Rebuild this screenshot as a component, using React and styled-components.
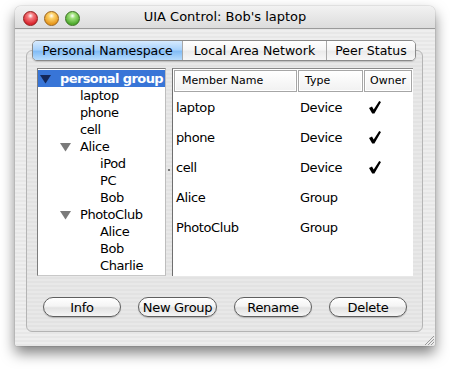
import styled, { createGlobalStyle } from "styled-components";

const GlobalStyle = createGlobalStyle`
    html, body {
        margin: 0;
        padding: 0;
        background: #ffffff;
    }
    body {
        width: 450px;
        height: 369px;
        overflow: hidden;
        font-family: "DejaVu Sans", "Liberation Sans", sans-serif;
        color: #000;
    }
`;

const pinstripe = `repeating-linear-gradient(to bottom, #eeeeee 0px, #eeeeee 2px, #e7e7e7 2px, #e7e7e7 4px)`;

const StyledStage = styled.div`
    padding: 6px 0 0 15px;
`;

const StyledWindow = styled.div`
    width: 420px;
    height: 340px;
    display: flex;
    flex-direction: column;
    border-radius: 6px 6px 2px 2px;
    background: ${pinstripe};
    box-shadow: 0 7px 14px rgba(0, 0, 0, 0.5), 0 0 1px rgba(0, 0, 0, 0.6);
    overflow: hidden;
    position: relative;
`;

const StyledTitleBar = styled.div`
    height: 22px;
    flex-shrink: 0;
    display: flex;
    align-items: center;
    padding-left: 8px;
    background: linear-gradient(to bottom, #f2f2f2, #dcdcdc);
    border-bottom: 1px solid #9a9a9a;
    position: relative;
`;

const StyledLights = styled.div`
    display: flex;
    gap: 6px;
    margin-top: 3px;
`;

const StyledLight = styled.span`
    width: 13px;
    height: 13px;
    border-radius: 50%;
    border: 1px solid ${props => props.edge};
    background: radial-gradient(circle at 50% 30%, #ffffff 0%, ${props => props.hi} 25%, ${props => props.base} 75%, ${props => props.hi} 100%);
`;

const StyledTitle = styled.div`
    position: absolute;
    left: 0;
    right: 0;
    top: 0;
    line-height: 22px;
    text-align: center;
    font-size: 13px;
    pointer-events: none;
`;

const StyledContent = styled.div`
    flex: 1;
    display: flex;
    flex-direction: column;
    padding: 11px 12px 14px 11px;
`;

const StyledTabStrip = styled.div`
    display: flex;
    margin-left: 6px;
    position: relative;
    z-index: 1;
    align-self: flex-start;
    border: 1px solid #8a8a8a;
    border-radius: 5px;
    overflow: hidden;
    box-shadow: 0 1px 1px rgba(0, 0, 0, 0.15);
`;

const StyledTab = styled.div`
    width: ${props => props.width}px;
    height: 19px;
    line-height: 19px;
    font-size: 12.5px;
    text-align: center;
    border-left: ${props => props.first ? "none" : "1px solid #a8a8a8"};
    background: ${props => props.active
        ? "linear-gradient(to bottom, #d6eafe 0%, #a9d2fb 45%, #83bdf6 55%, #b7dcfd 100%)"
        : "linear-gradient(to bottom, #ffffff 0%, #f6f6f6 45%, #ebebeb 55%, #f7f7f7 100%)"};
`;

const StyledGroup = styled.div`
    flex: 1;
    margin-top: -11px;
    border: 1px solid #b4b4b4;
    border-radius: 6px;
    background: repeating-linear-gradient(to bottom, #e8e8e8 0px, #e8e8e8 2px, #e2e2e2 2px, #e2e2e2 4px);
    display: flex;
    flex-direction: column;
    padding: 17px 9px 14px 10px;
`;

const StyledPanes = styled.div`
    display: flex;
    height: 208px;
`;

const StyledTree = styled.div`
    width: 127px;
    background: #fff;
    border: 1px solid;
    border-color: #7d7d7d #bdbdbd #c8c8c8 #7d7d7d;
    padding-top: 1px;
`;

const StyledSplitter = styled.div`
    width: 6px;
    display: flex;
    align-items: center;
    justify-content: center;
    padding-bottom: 4px;
`;

const StyledGrip = styled.span`
    width: 2px;
    height: 2px;
    border-radius: 1px;
    background: #555;
`;

const StyledTreeRow = styled.div`
    height: 17px;
    display: flex;
    align-items: center;
    padding-left: ${props => props.level * 20 + 2}px;
    font-size: 13px;
    letter-spacing: ${props => props.selected ? "-0.6px" : "-0.4px"};
    font-weight: ${props => props.selected ? "bold" : "normal"};
    color: ${props => props.selected ? "#ffffff" : "#000000"};
    background: ${props => props.selected ? "#3875d7" : "transparent"};
    white-space: nowrap;
    overflow: hidden;
`;

const StyledDisclosure = styled.span`
    width: 20px;
    flex-shrink: 0;
    display: flex;
    align-items: center;
`;

const StyledTable = styled.div`
    flex: 1;
    background: #fff;
    border-left: 1px solid #6f6f6f;
    border-top: 1px solid #8a8a8a;
    display: flex;
    flex-direction: column;
    padding: 1px 0 0 1px;
`;

const StyledTableHeader = styled.div`
    display: flex;
    height: 22px;
`;

const StyledHeaderCell = styled.div`
    width: ${props => props.width}px;
    box-sizing: border-box;
    margin-right: 1px;
    border: 1px solid #a6a6a6;
    box-shadow: inset 0 0 0 1px #ffffff;
    background: linear-gradient(to bottom, #ffffff, #f1f1f1);
    font-size: 11px;
    line-height: 20px;
    padding-left: ${props => props.pad}px;
`;

const StyledTableRow = styled.div`
    display: flex;
    height: 30px;
    align-items: center;
    font-size: 13px;
    letter-spacing: -0.4px;
`;

const StyledCell = styled.div`
    width: ${props => props.width}px;
    padding-left: ${props => props.pad}px;
    box-sizing: border-box;
    display: flex;
    align-items: center;
`;

const StyledButtons = styled.div`
    display: flex;
    gap: 17px;
    margin-top: 21px;
    padding-left: 6px;
`;

const StyledButton = styled.button`
    width: ${props => props.width}px;
    height: 20px;
    padding: 0;
    border: 1px solid #5f5f5f;
    border-radius: 10px;
    background: linear-gradient(to bottom, #ffffff 0%, #f4f4f4 45%, #e2e2e2 55%, #f5f5f5 100%);
    box-shadow: 0 1px 1px rgba(0, 0, 0, 0.2);
    font-family: inherit;
    font-size: 13px;
    letter-spacing: -0.3px;
    color: #000;
`;

const StyledResize = styled.svg`
    position: absolute;
    right: 1px;
    bottom: 1px;
`;

const tree = [
    { label: "personal group", level: 0, open: true, selected: true },
    { label: "laptop", level: 1 },
    { label: "phone", level: 1 },
    { label: "cell", level: 1 },
    { label: "Alice", level: 1, open: true },
    { label: "iPod", level: 2 },
    { label: "PC", level: 2 },
    { label: "Bob", level: 2 },
    { label: "PhotoClub", level: 1, open: true },
    { label: "Alice", level: 2 },
    { label: "Bob", level: 2 },
    { label: "Charlie", level: 2 },
];

const members = [
    { name: "laptop", type: "Device", owner: true },
    { name: "phone", type: "Device", owner: true },
    { name: "cell", type: "Device", owner: true },
    { name: "Alice", type: "Group" },
    { name: "PhotoClub", type: "Group" },
];

function Triangle({ color }) {
    return (
        <svg width="11" height="10" viewBox="0 0 11 10">
            <polygon points="0,1 11,1 5.5,9.5" fill={color} />
        </svg>
    );
}

function Check() {
    return (
        <svg width="12" height="13" viewBox="0 0 12 13">
            <polygon points="0,7 3,5.4 4.7,8.4 10.2,0 12,1.1 5.4,12.6 3.2,12.6" fill="#000" />
        </svg>
    );
}

export default function App() {
    return (
        <StyledStage>
            <GlobalStyle />
            <StyledWindow>
                <StyledTitleBar>
                    <StyledLights>
                        <StyledLight base="#d8212a" hi="#f47a7e" edge="#8e1b1b" />
                        <StyledLight base="#e6951a" hi="#fcd26a" edge="#99621a" />
                        <StyledLight base="#4aa72a" hi="#9fe07a" edge="#3a7020" />
                    </StyledLights>
                    <StyledTitle>UIA Control: Bob's laptop</StyledTitle>
                </StyledTitleBar>
                <StyledContent>
                    <StyledTabStrip>
                        <StyledTab first active width={149}>Personal Namespace</StyledTab>
                        <StyledTab width={143}>Local Area Network</StyledTab>
                        <StyledTab width={88}>Peer Status</StyledTab>
                    </StyledTabStrip>
                    <StyledGroup>
                        <StyledPanes>
                            <StyledTree>
                                {tree.map((item, i) => (
                                    <StyledTreeRow key={i} level={item.level} selected={item.selected}>
                                        <StyledDisclosure>
                                            {item.open && <Triangle color={item.selected ? "#14285a" : "#7a7a7a"} />}
                                        </StyledDisclosure>
                                        {item.label}
                                    </StyledTreeRow>
                                ))}
                            </StyledTree>
                            <StyledSplitter>
                                <StyledGrip />
                            </StyledSplitter>
                            <StyledTable>
                                <StyledTableHeader>
                                    <StyledHeaderCell width={123} pad={7}>Member Name</StyledHeaderCell>
                                    <StyledHeaderCell width={65} pad={6}>Type</StyledHeaderCell>
                                    <StyledHeaderCell width={48} pad={5}>Owner</StyledHeaderCell>
                                </StyledTableHeader>
                                {members.map(m => (
                                    <StyledTableRow key={m.name}>
                                        <StyledCell width={124} pad={2}>{m.name}</StyledCell>
                                        <StyledCell width={66} pad={2}>{m.type}</StyledCell>
                                        <StyledCell width={48} pad={5}>
                                            {m.owner && <Check />}
                                        </StyledCell>
                                    </StyledTableRow>
                                ))}
                            </StyledTable>
                        </StyledPanes>
                        <StyledButtons>
                            <StyledButton width={78}>Info</StyledButton>
                            <StyledButton width={79}>New Group</StyledButton>
                            <StyledButton width={78}>Rename</StyledButton>
                            <StyledButton width={78}>Delete</StyledButton>
                        </StyledButtons>
                    </StyledGroup>
                </StyledContent>
                <StyledResize width="11" height="11" viewBox="0 0 11 11">
                    <line x1="2" y1="11" x2="11" y2="2" stroke="#9a9a9a" />
                    <line x1="5" y1="11" x2="11" y2="5" stroke="#9a9a9a" />
                    <line x1="8" y1="11" x2="11" y2="8" stroke="#9a9a9a" />
                </StyledResize>
            </StyledWindow>
        </StyledStage>
    );
}
